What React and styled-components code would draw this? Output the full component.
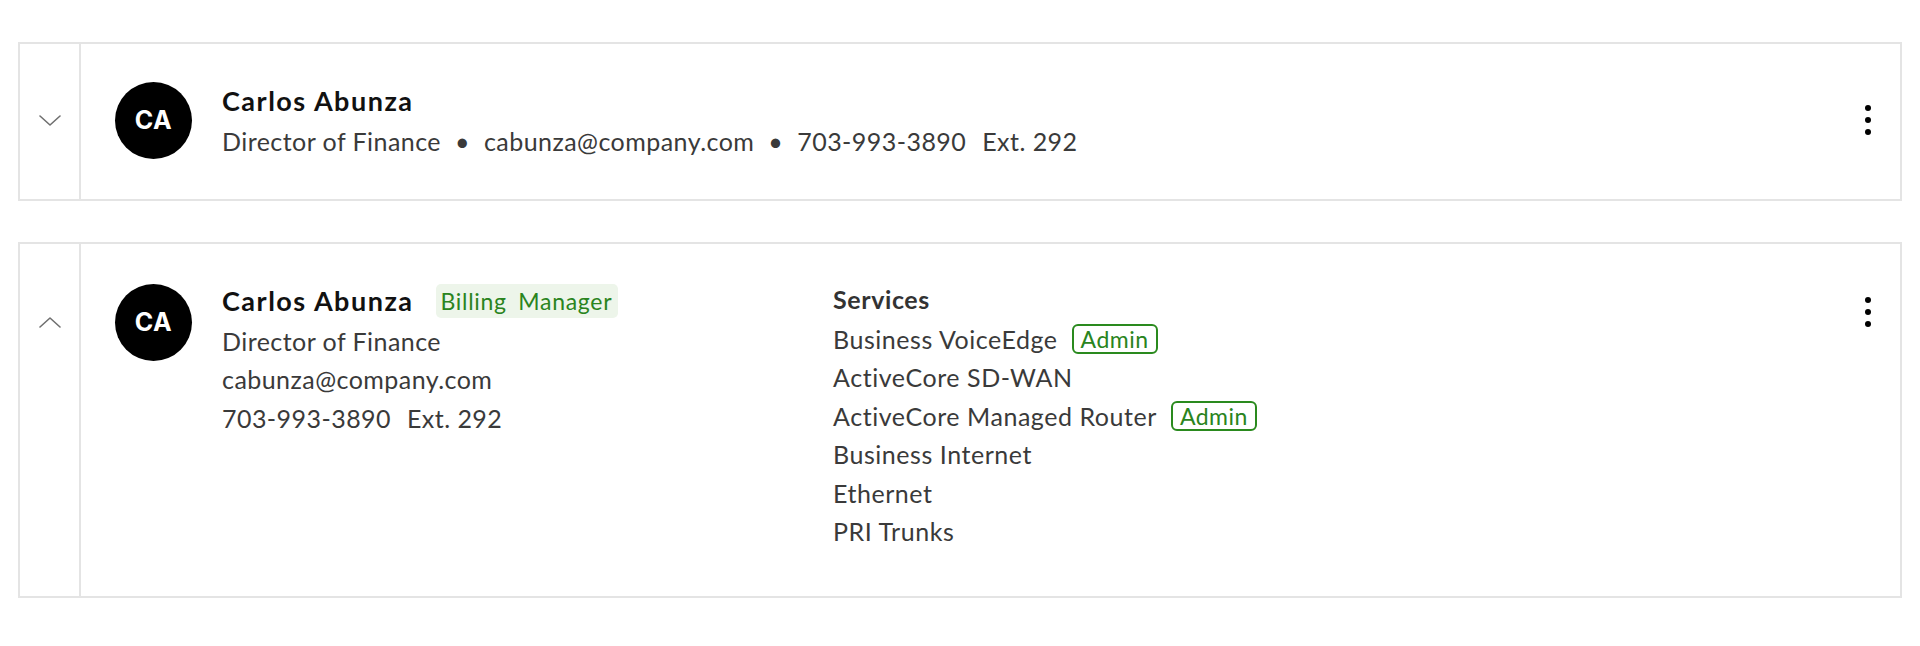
import React from 'react';
import styled, { createGlobalStyle } from 'styled-components';

const GlobalStyle = createGlobalStyle`
  body {
    margin: 0;
    background: #ffffff;
    font-family: Lato, "Open Sans", sans-serif;
    color: #3a3a3a;
  }
`;

const Page = styled.div`
  display: flex;
  flex-direction: column;
  gap: 41px;
  padding: 42px 18px;
`;

const Card = styled.div`
  display: flex;
  border: 2px solid #e4e4e4;
  background: #fff;
`;

const Toggle = styled.div`
  width: 59px;
  flex-shrink: 0;
  border-right: 2px solid #e4e4e4;
  display: flex;
  justify-content: center;
  align-items: ${(p) => (p.$expanded ? 'flex-start' : 'center')};
  padding-top: ${(p) => (p.$expanded ? '40px' : '0')};
`;

const ChevronBox = styled.div`
  height: 77px;
  display: flex;
  align-items: center;
  justify-content: center;
  color: #707070;
`;

const Main = styled.div`
  flex: 1;
  display: flex;
  align-items: ${(p) => (p.$expanded ? 'flex-start' : 'center')};
  padding: ${(p) => (p.$expanded ? '36px 29px 45px 34px' : '36px 29px 38px 34px')};
`;

const Avatar = styled.div`
  width: 77px;
  height: 77px;
  border-radius: 50%;
  background: #000;
  color: #fff;
  display: flex;
  align-items: center;
  justify-content: center;
  font-family: Inter, "Open Sans", sans-serif;
  font-weight: 700;
  font-size: 25px;
  letter-spacing: 0.5px;
  flex-shrink: 0;
  margin-top: ${(p) => (p.$expanded ? '4px' : '0')};
  margin-right: 30px;
`;

const Info = styled.div`
  display: flex;
  flex-direction: column;
  width: ${(p) => (p.$expanded ? '611px' : 'auto')};
  flex-shrink: 0;
`;

const NameRow = styled.div`
  display: flex;
  align-items: center;
  height: 42px;
`;

const Name = styled.div`
  font-size: 27px;
  font-weight: 700;
  letter-spacing: 1.5px;
  color: #111;
  line-height: 42px;
`;

const RoleBadge = styled.span`
  margin-left: 22px;
  height: 34px;
  display: inline-flex;
  align-items: center;
  padding: 0 6px 0 5px;
  border-radius: 5px;
  background: #edf5ea;
  color: #2a8420;
  font-size: 23px;
  letter-spacing: 0.7px;
  word-spacing: 5px;
`;

const Line = styled.div`
  font-size: 25px;
  letter-spacing: 0.45px;
  line-height: 38.5px;
  color: #3a3a3a;
  white-space: nowrap;
`;

const Dot = styled.span`
  margin: 0 14px;
`;

const Ext = styled.span`
  margin-left: 16px;
`;

const Services = styled.div`
  display: flex;
  flex-direction: column;
`;

const ServicesTitle = styled.div`
  font-size: 25px;
  font-weight: 700;
  letter-spacing: 0.6px;
  line-height: 38px;
  margin-bottom: 2px;
  color: #333;
`;

const ServiceRow = styled.div`
  display: flex;
  align-items: center;
  height: 38.5px;
  font-size: 25px;
  letter-spacing: 0.55px;
  color: #3a3a3a;
  white-space: nowrap;
`;

const AdminBadge = styled.span`
  margin-left: 14px;
  height: 30px;
  box-sizing: border-box;
  display: inline-flex;
  align-items: center;
  padding: 0 7px;
  border: 2px solid #2a8a1e;
  border-radius: 6px;
  color: #2a8420;
  font-size: 23px;
  letter-spacing: 0.5px;
`;

const Kebab = styled.button`
  margin-left: auto;
  align-self: ${(p) => (p.$expanded ? 'flex-start' : 'center')};
  margin-top: ${(p) => (p.$expanded ? '17px' : '0')};
  display: flex;
  flex-direction: column;
  gap: 6px;
  padding: 0;
  border: none;
  background: none;
  cursor: pointer;
`;

const KebabDot = styled.span`
  width: 6px;
  height: 6px;
  border-radius: 50%;
  background: #000;
`;

const Chevron = ({ up }) => (
  <svg width="22" height="12" viewBox="0 0 22 12" fill="none">
    <polyline
      points={up ? '1,11 11,2 21,11' : '1,1 11,10 21,1'}
      stroke="currentColor"
      strokeWidth="1.6"
      strokeLinecap="round"
      strokeLinejoin="round"
    />
  </svg>
);

const MoreButton = ({ expanded }) => (
  <Kebab $expanded={expanded} aria-label="More">
    <KebabDot />
    <KebabDot />
    <KebabDot />
  </Kebab>
);

const contact = {
  initials: 'CA',
  name: 'Carlos Abunza',
  title: 'Director of Finance',
  email: 'cabunza@company.com',
  phone: '703-993-3890',
  ext: 'Ext. 292',
  role: 'Billing Manager',
  services: [
    { name: 'Business VoiceEdge', admin: true },
    { name: 'ActiveCore SD-WAN' },
    { name: 'ActiveCore Managed Router', admin: true },
    { name: 'Business Internet' },
    { name: 'Ethernet' },
    { name: 'PRI Trunks' },
  ],
};

const CollapsedCard = ({ c }) => (
  <Card>
    <Toggle>
      <ChevronBox>
        <Chevron />
      </ChevronBox>
    </Toggle>
    <Main>
      <Avatar>{c.initials}</Avatar>
      <Info>
        <NameRow>
          <Name>{c.name}</Name>
        </NameRow>
        <Line>
          {c.title}
          <Dot>•</Dot>
          {c.email}
          <Dot>•</Dot>
          {c.phone}
          <Ext>{c.ext}</Ext>
        </Line>
      </Info>
      <MoreButton />
    </Main>
  </Card>
);

const ExpandedCard = ({ c }) => (
  <Card>
    <Toggle $expanded>
      <ChevronBox>
        <Chevron up />
      </ChevronBox>
    </Toggle>
    <Main $expanded>
      <Avatar $expanded>{c.initials}</Avatar>
      <Info $expanded>
        <NameRow>
          <Name>{c.name}</Name>
          <RoleBadge>{c.role}</RoleBadge>
        </NameRow>
        <Line>{c.title}</Line>
        <Line>{c.email}</Line>
        <Line>
          {c.phone}
          <Ext>{c.ext}</Ext>
        </Line>
      </Info>
      <Services>
        <ServicesTitle>Services</ServicesTitle>
        {c.services.map((s) => (
          <ServiceRow key={s.name}>
            {s.name}
            {s.admin && <AdminBadge>Admin</AdminBadge>}
          </ServiceRow>
        ))}
      </Services>
      <MoreButton expanded />
    </Main>
  </Card>
);

export default function App() {
  return (
    <>
      <GlobalStyle />
      <Page>
        <CollapsedCard c={contact} />
        <ExpandedCard c={contact} />
      </Page>
    </>
  );
}
